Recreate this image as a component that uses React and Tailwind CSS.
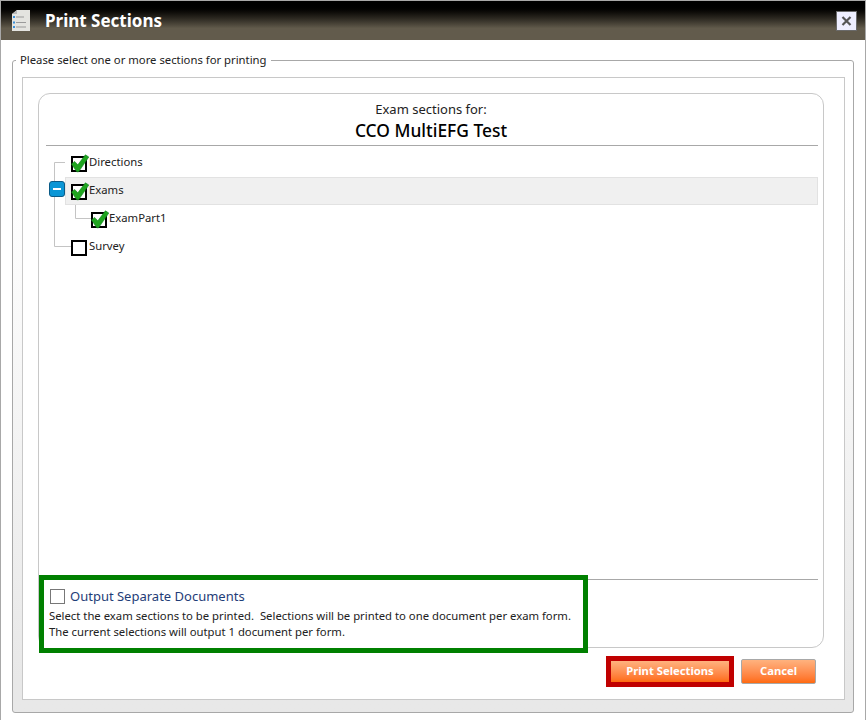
const font = { fontFamily: '"Noto Sans", "Open Sans", sans-serif' };

function Check() {
  return (
    <svg className="absolute left-0 top-[-3px] w-[18px] h-[19px] overflow-visible" viewBox="0 0 18 19">
      <path d="M0.5 10 L3.6 7.4 L6.8 10.8 L14.4 0.8 L17.8 3 L7.6 17.8 L5.8 17.8 Z" fill="#1fa51f" stroke="#0f7f1f" strokeWidth="0.6" />
    </svg>
  );
}

function Box({ checked }) {
  return (
    <span className="relative block w-[16px] h-[16px] border-2 border-black bg-white shrink-0 mt-[2px]">
      {checked && <span className="absolute left-[-2px] top-[-1px] block"><Check /></span>}
    </span>
  );
}

function Row({ label, checked, indent, selected }) {
  return (
    <div className={`flex items-center h-[28px] ${selected ? 'bg-[#f0f0f0] border border-[#e2e2e2] ml-[26px] mr-[5px] pl-[5px]' : indent ? 'ml-[52px]' : 'ml-[32px]'}`}>
      <Box checked={checked} />
      <span className="ml-[2px] mb-[2px] text-[11.3px] leading-none text-[#222]">{label}</span>
    </div>
  );
}

export default function App() {
  return (
    <div style={font} className="w-[866px] h-[720px] bg-white border border-[#a8a8a8] border-b-0 overflow-hidden">
      <header className="h-[39px] flex items-center bg-gradient-to-b from-black from-[8%] to-[#625b4c] to-[70%] relative">
        <svg className="absolute left-[10px] top-[8px] w-[20px] h-[23px]" viewBox="0 0 20 23">
          <path d="M1 5 L6 1 H19 V22 H1 Z" fill="#e4e4e0" />
          <path d="M1 5 L6 1 V5 Z" fill="#b8b8b8" />
          <path d="M5 8 H13 M5 13.5 H15 M5 18 H15" stroke="#9a9a9a" strokeWidth="1" />
          <rect x="2" y="7" width="2" height="2" fill="#3a8fd8" />
          <rect x="2" y="12.5" width="2" height="2" fill="#3a8fd8" />
          <rect x="2" y="17" width="2" height="2" fill="#3a8fd8" />
        </svg>
        <h1 className="ml-[44px] text-[17px] leading-none font-bold text-white">Print Sections</h1>
        <button className="absolute left-[835px] top-[10px] w-[21px] h-[20px] bg-[#eeeeff] border border-[#6a6a6a] flex items-center justify-center">
          <svg width="11" height="10" viewBox="0 0 11 10"><path d="M1.5 1 L9.5 9 M9.5 1 L1.5 9" stroke="#555" strokeWidth="2.2" /></svg>
        </button>
      </header>
      <main className="pt-[12px] pl-[11px]">
        <fieldset className="w-[842px] h-[661px] border border-[#a8a8a8] rounded-[3px] bg-gradient-to-b from-white from-[20%] to-[#e8e8e8] to-[95%] pl-[9px]">
          <legend className="ml-[-6px] px-[4px] text-[11.3px] leading-[15px] pb-[2px] text-[#222]">Please select one or more sections for printing</legend>
          <div className="mt-[8px] w-[823px] h-[623px] bg-white border border-[#c8c8c8] pt-[15px] pl-[15px]">
            <section className="relative w-[786px] h-[555px] border border-[#c8c8c8] rounded-[12px] flex flex-col">
              <div className="text-center pt-[7px]">
                <p className="text-[13px] leading-[17px] text-[#222]">Exam sections for:</p>
                <p className="text-[17.4px] leading-[24px] font-medium text-black">CCO MultiEFG Test</p>
              </div>
              <div className="ml-[7px] mr-[5px] mt-[3px] border-t border-[#a8a8a8]"></div>
              <div className="relative flex-1 pt-[3px]">
                <svg className="absolute left-0 top-0 w-[80px] h-[120px]" viewBox="0 0 80 120">
                  <path d="M15.5 16.5 H26 M15.5 16.5 V100.5 H32 M36.5 58 V72.5 H52" fill="none" stroke="#c4c4c4" strokeWidth="1" />
                </svg>
                <span className="absolute left-[10px] top-[35px] w-[16px] h-[16px] rounded-[3px] bg-[#0a96d6] border border-[#0a5a86] flex items-center justify-center">
                  <span className="block w-[8px] h-[2px] bg-white"></span>
                </span>
                <div className="relative">
                  <Row label="Directions" checked />
                  <Row label="Exams" checked selected />
                  <Row label="ExamPart1" checked indent />
                  <Row label="Survey" />
                </div>
              </div>
              <div className="ml-[7px] mr-[5px] mb-[67px] border-t border-[#a8a8a8]"></div>
              <div className="absolute left-0 top-[481px] w-[549px] h-[78px] border-[5px] border-[#008000] bg-white pl-[5px] pt-[7px]">
                <label className="flex items-center">
                  <span className="ml-[1px] block w-[15px] h-[15px] border border-[#777] bg-white"></span>
                  <span className="ml-[5px] text-[13px] leading-[18px] text-[#1f3d78]">Output Separate Documents</span>
                </label>
                <p className="mt-[3px] text-[11.3px] leading-[16px] text-[#222] whitespace-pre">{'Select the exam sections to be printed.  Selections will be printed to one document per exam form.\nThe current selections will output 1 document per form.'}</p>
              </div>
            </section>
            <div className="w-[778px] mt-[8px] flex justify-end items-center gap-[7px]">
              <button className="w-[128px] h-[31px] border-[5px] border-[#c00000] bg-gradient-to-b from-[#ffb27e] to-[#ff6a0a] text-white text-[11.25px] font-bold leading-none pb-[2px]">Print Selections</button>
              <button className="w-[75px] h-[25px] rounded-[2px] border border-[#a8a8a8] bg-gradient-to-b from-[#ffb27e] to-[#ff6a0a] text-white text-[11.25px] font-bold leading-none pb-[2px]">Cancel</button>
            </div>
          </div>
        </fieldset>
      </main>
    </div>
  );
}
